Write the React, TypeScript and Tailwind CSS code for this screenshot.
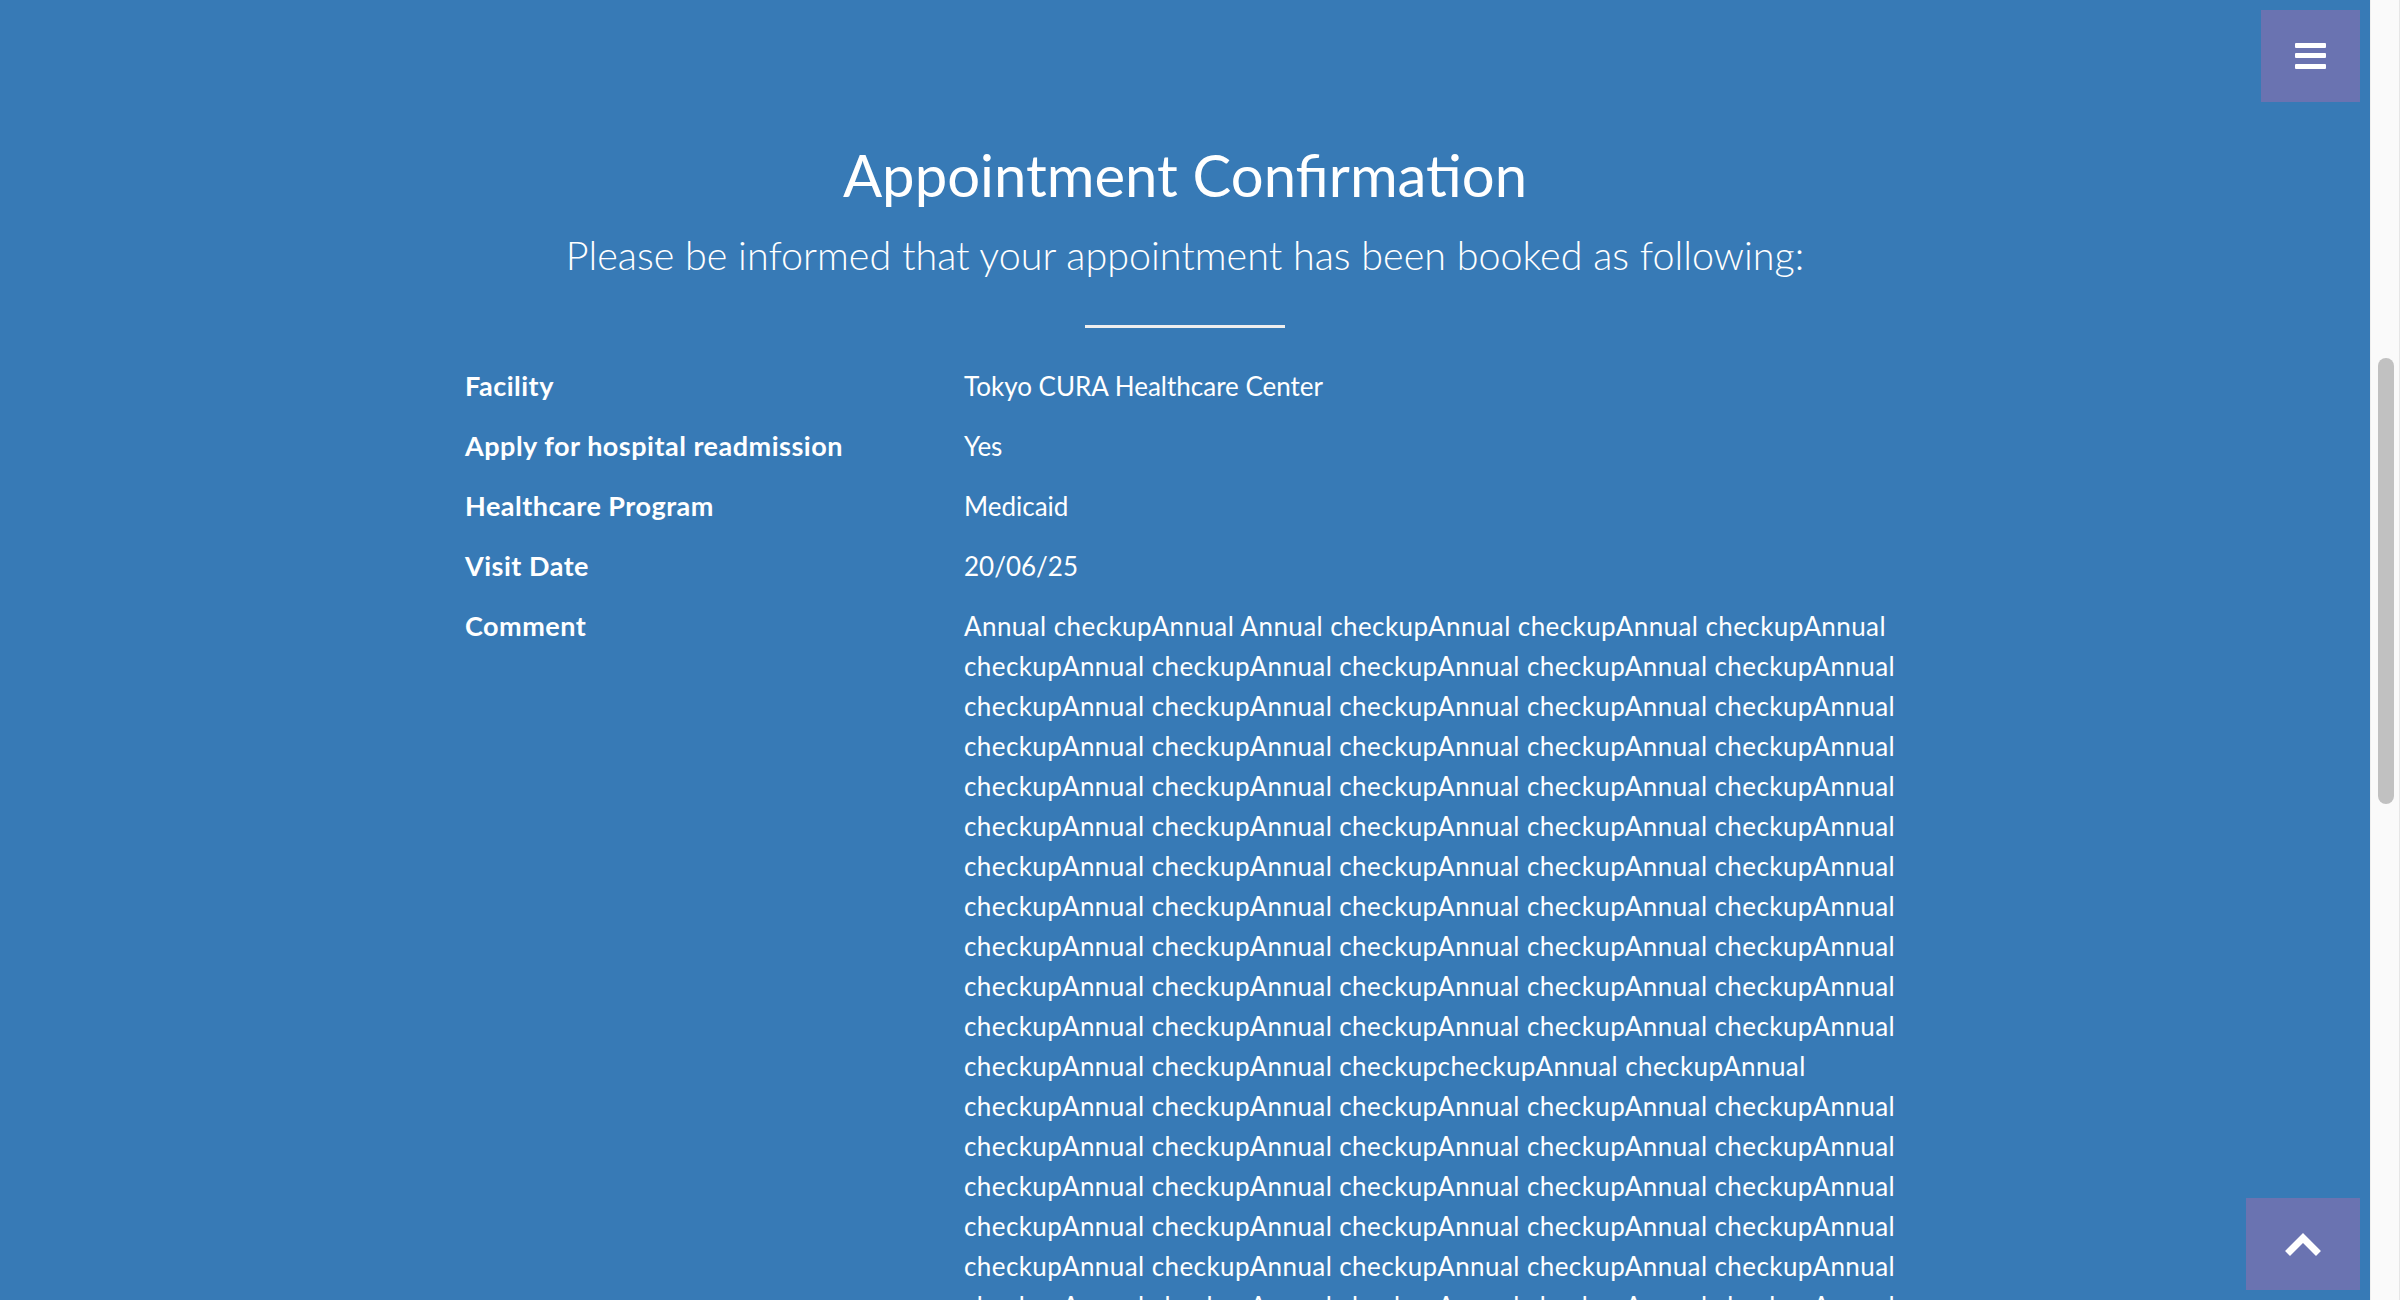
import { useMemo } from 'react'

const FULL = 'checkupAnnual checkupAnnual checkupAnnual checkupAnnual checkupAnnual'

const details = [
  { label: 'Facility', value: 'Tokyo CURA Healthcare Center' },
  { label: 'Apply for hospital readmission', value: 'Yes' },
  { label: 'Healthcare Program', value: 'Medicaid' },
  { label: 'Visit Date', value: '20/06/25' },
]

function MenuButton() {
  return (
    <button className="absolute right-[10px] top-[10px] flex h-[92px] w-[99px] items-center justify-center bg-[#6a73b1]">
      <svg width="31" height="26" viewBox="0 0 31 26" fill="#ffffff">
        <rect x="0" y="0" width="31" height="5" rx="1" />
        <rect x="0" y="10" width="31" height="5" rx="1" />
        <rect x="0" y="21" width="31" height="5" rx="1" />
      </svg>
    </button>
  )
}

function ToTopButton() {
  return (
    <button className="absolute bottom-[10px] right-[10px] flex h-[92px] w-[114px] items-center justify-center bg-[#6a73b1]">
      <svg width="40" height="30" viewBox="0 0 40 30" fill="none">
        <polyline points="7,22 20,9 33,22" stroke="#ffffff" strokeWidth="7" strokeLinecap="square" strokeLinejoin="miter" />
      </svg>
    </button>
  )
}

function FakeScrollbar() {
  return (
    <div className="h-full w-[30px] shrink-0 border-l border-r border-l-[#efefef] border-r-[#e6e6e6] bg-[#fafafa] pl-[7px] pt-[358px]">
      <div className="h-[446px] w-[16px] rounded-full bg-[#c1c1c1]" />
    </div>
  )
}

export default function App() {
  const commentLines = useMemo(() => {
    const lines = ['Annual checkupAnnual Annual checkupAnnual checkupAnnual checkupAnnual']
    for (let i = 0; i < 10; i++) lines.push(FULL)
    lines.push('checkupAnnual checkupAnnual checkupcheckupAnnual checkupAnnual')
    for (let i = 0; i < 10; i++) lines.push(FULL)
    return lines
  }, [])

  return (
    <div className="flex h-[1300px] w-full overflow-hidden bg-[#377ab6] font-['Lato',sans-serif] text-white">
      <main className="relative flex-1 overflow-hidden">
        <section className="pt-[143px] text-center">
          <h2 className="text-[58px] font-normal leading-[64px]">Appointment Confirmation</h2>
          <p className="mt-[26px] text-[39.5px] font-light leading-[43px]">
            Please be informed that your appointment has been booked as following:
          </p>
          <hr className="mx-auto mt-[49px] w-[200px] border-t-[3px] border-[#eeeeee]" />
        </section>

        <div className="ml-[465px] mt-[38px] w-[1452px] leading-[40px]">
          {details.map((d) => (
            <div key={d.label} className="mb-[20px] grid grid-cols-[499px_1fr]">
              <span className="text-[27px] font-bold tracking-[0.5px]">{d.label}</span>
              <span className="text-[26px] tracking-[0px]">{d.value}</span>
            </div>
          ))}
          <div className="grid grid-cols-[499px_1fr]">
            <span className="text-[27px] font-bold tracking-[0.5px]">Comment</span>
            <p className="whitespace-nowrap text-[26px] tracking-[0.42px]">
              {commentLines.map((line, i) => (
                <span key={i} className="block">
                  {line}
                </span>
              ))}
            </p>
          </div>
        </div>

        <MenuButton />
        <ToTopButton />
      </main>
      <FakeScrollbar />
    </div>
  )
}
